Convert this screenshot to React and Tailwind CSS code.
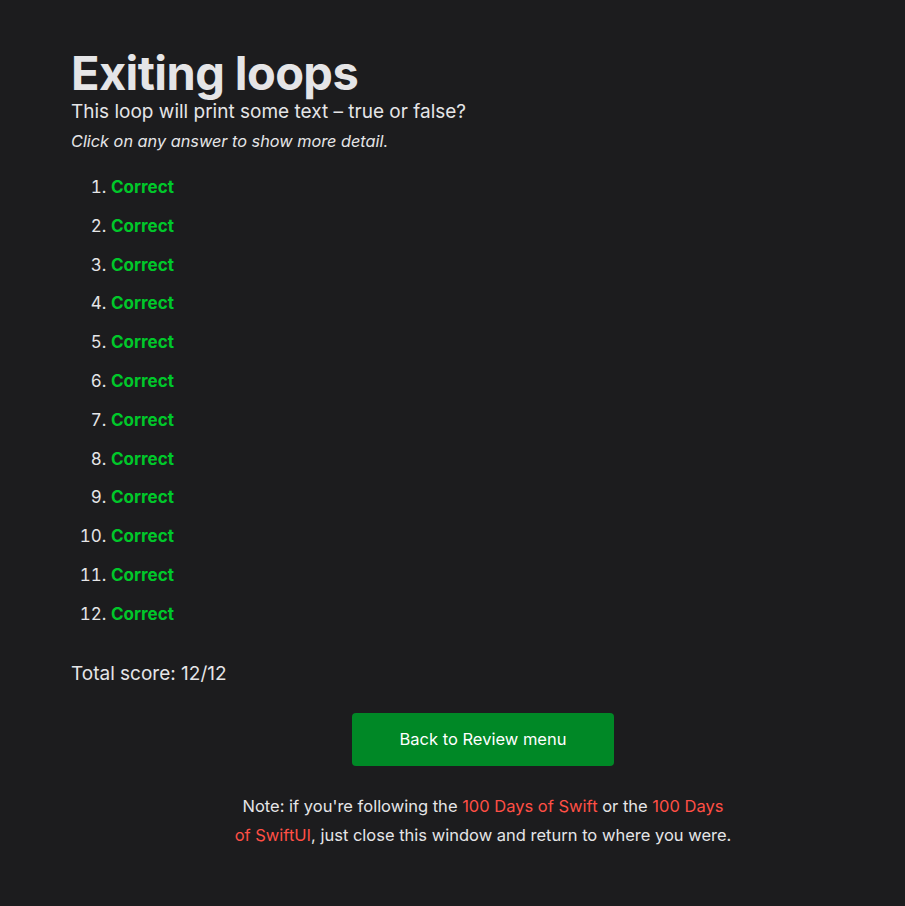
export default function App() {
  const items = Array.from({ length: 12 }, (_, i) => i + 1);
  return (
    <div
      className="min-h-[906px] w-full bg-[#1c1c1e] text-[#e5e5e7]"
      style={{ fontFamily: "Inter, 'Noto Sans', sans-serif" }}
    >
      <div className="pl-[71px] pr-[10px] pt-[44px] pb-10">
        <h1 className="text-[47px] font-bold leading-[58px] tracking-[-0.6px] text-[#e5e5e7]">Exiting loops</h1>
        <p className="text-[19px] leading-[24px] mt-[-2px]">This loop will print some text – true or false?</p>
        <p className="text-[16.3px] italic leading-[24px] mt-[5px]">Click on any answer to show more detail.</p>
        <ol className="list-decimal pl-[40px] mt-[22px]">
          {items.map((n) => (
            <li key={n} className="text-[17px] leading-[24px] mb-[14.8px] marker:text-[#e5e5e7]">
              <span className="font-bold text-[#00c82a]">Correct</span>
            </li>
          ))}
        </ol>
        <p className="text-[19px] leading-[24px] mt-[36px]">Total score: 12/12</p>
        <div className="flex justify-center mt-[27px]">
          <button className="w-[262px] h-[53px] rounded-[4px] bg-[#008826] text-white text-[16.5px]">
            Back to Review menu
          </button>
        </div>
        <p className="text-center text-[16.5px] leading-[29px] mt-[26px] whitespace-nowrap">
          Note: if you're following the <span className="text-[#ff4f45]">100 Days of Swift</span> or the{" "}
          <span className="text-[#ff4f45]">100 Days</span>
          <br />
          <span className="text-[#ff4f45]">of SwiftUI</span>, just close this window and return to where you were.
        </p>
      </div>
    </div>
  );
}
